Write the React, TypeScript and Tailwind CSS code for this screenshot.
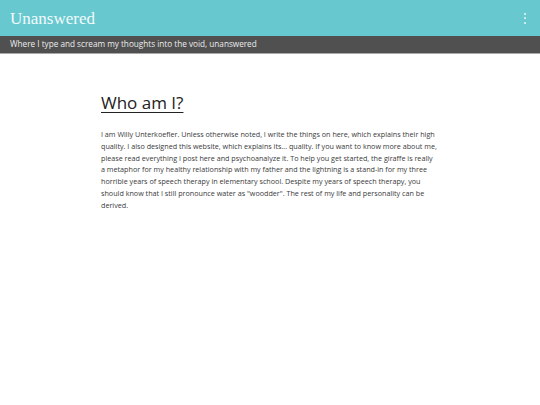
import React from "react";

export default function App() {
  return (
    <div className="min-h-[405px] w-[540px] bg-white">
      <header className="flex h-[36px] items-center justify-between bg-[#68c8cf] pl-[10px] pr-[14px]">
        <div className="text-[17px] leading-none text-[#f2fbfb] [font-family:'Liberation_Serif',serif]">Unanswered</div>
        <div className="flex flex-col gap-[2.5px]">
          <span className="block h-[2px] w-[2px] rounded-full bg-[#e8f8f8]" />
          <span className="block h-[2px] w-[2px] rounded-full bg-[#e8f8f8]" />
          <span className="block h-[2px] w-[2px] rounded-full bg-[#e8f8f8]" />
        </div>
      </header>
      <div className="flex h-[18px] items-center border-b border-[#a8a8a8] bg-[#505050] pl-[10px] text-[8.2px] text-[#ececec] [font-family:'Open_Sans',sans-serif]">
        Where I type and scream my thoughts into the void, unanswered
      </div>
      <main className="pl-[101px] pt-[38px] [font-family:'Open_Sans',sans-serif]">
        <h1 className="text-[17px] leading-[22px] text-[#222] underline decoration-1 underline-offset-[3px]">Who am I?</h1>
        <p className="mt-[15px] w-[336px] text-[7.2px] leading-[11.8px] text-[#3a3a3a]">
          I am Willy Unterkoefler. Unless otherwise noted, I write the things on here, which explains their high quality. I also designed this website, which explains its... quality. If you want to know more about me, please read everything I post here and psychoanalyze it. To help you get started, the giraffe is really a metaphor for my healthy relationship with my father and the lightning is a stand-in for my three horrible years of speech therapy in elementary school. Despite my years of speech therapy, you should know that I still pronounce water as "woodder". The rest of my life and personality can be derived.
        </p>
      </main>
    </div>
  );
}
